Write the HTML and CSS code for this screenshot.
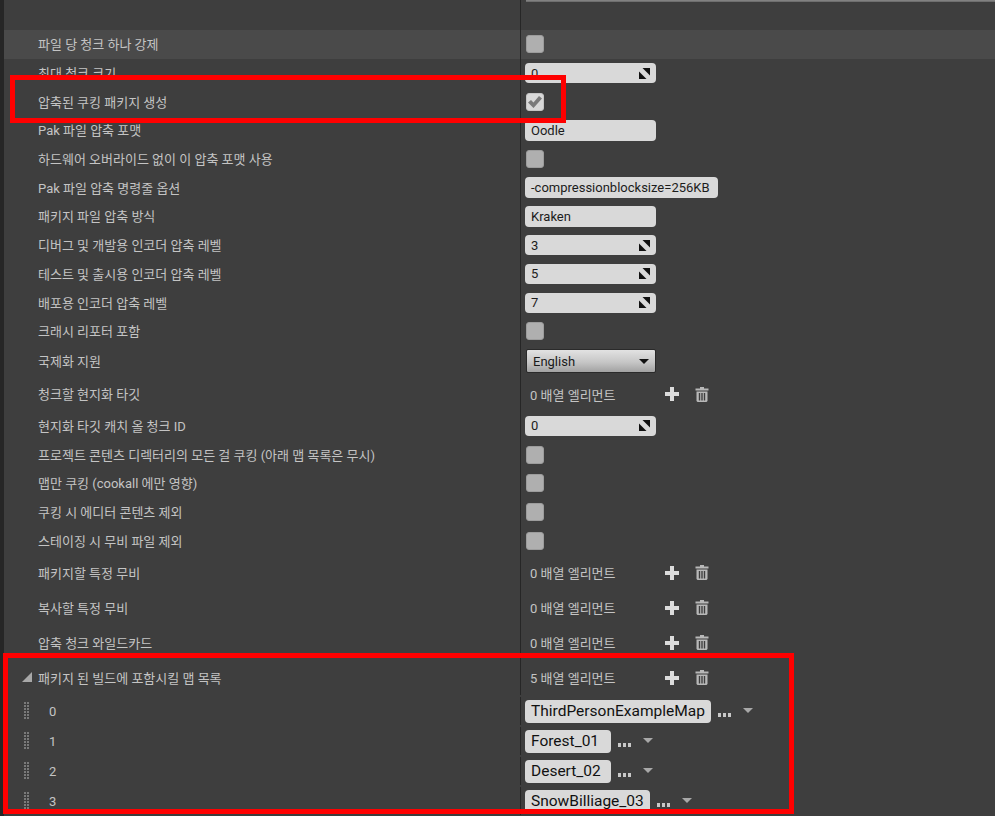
FILE: index.html
```html
<!DOCTYPE html>
<html lang="ko">
<head>
<meta charset="utf-8">
<title>패키징 설정</title>
<link rel="stylesheet" href="styles.css">
</head>
<body>
<svg class="defs" width="0" height="0" aria-hidden="true">
  <symbol id="spin" viewBox="0 0 11 11"><path d="M3.500 0H11V7.500Z"/><path d="M0 3.500L7.500 11H0Z"/></symbol>
  <symbol id="plus" viewBox="0 0 14 14"><path d="M5 0H9V5H14V9H9V14H5V9H0V5H5Z"/></symbol>
  <symbol id="trash" viewBox="0 0 14 15"><path d="M5 0H9V1.500H13.500V3.500H.5V1.500H5Z"/><path fill-rule="evenodd" d="M1.500 4.500H12.500V14L11.500 15H2.500L1.500 14ZM3.800 6V13.500H5.200V6ZM6.300 6V13.500H7.700V6ZM8.800 6V13.500H10.200V6Z"/></symbol>
  <symbol id="grip" viewBox="0 0 7 18"><path d="M0 0h2v2H0zM3 0h2v2H3zM0 3h2v2H0zM3 3h2v2H3zM0 6h2v2H0zM3 6h2v2H3zM0 9h2v2H0zM3 9h2v2H3zM0 12h2v2H0zM3 12h2v2H3zM0 15h2v2H0zM3 15h2v2H3z"/></symbol>
  <symbol id="check" viewBox="0 0 14 12"><path d="M0 6.500L3 4 5.500 6.500 11 0 14 2.500 5.500 12Z"/></symbol>
</svg>
<div class="page">
  <div class="strip"></div>
  <main class="panel">
    <div class="top"><div class="name"></div><div class="value"><div class="topline"></div></div></div>

    <div class="row h29 hover"><div class="name">파일 당 청크 하나 강제</div><div class="value"><span class="check"></span></div></div>
    <div class="row h29"><div class="name">최대 청크 크기</div><div class="value"><div class="num">0<svg class="spin"><use href="#spin"/></svg></div></div></div>
    <div class="row h28"><div class="name">압축된 쿠킹 패키지 생성</div><div class="value"><span class="check on"><svg class="tick"><use href="#check"/></svg></span></div></div>
    <div class="row h29"><div class="name">Pak 파일 압축 포맷</div><div class="value"><div class="txt">Oodle</div></div></div>
    <div class="row h29"><div class="name">하드웨어 오버라이드 없이 이 압축 포맷 사용</div><div class="value"><span class="check"></span></div></div>
    <div class="row h28"><div class="name">Pak 파일 압축 명령줄 옵션</div><div class="value"><div class="txt wide">-compressionblocksize=256KB</div></div></div>
    <div class="row h29"><div class="name">패키지 파일 압축 방식</div><div class="value"><div class="txt">Kraken</div></div></div>
    <div class="row h29"><div class="name">디버그 및 개발용 인코더 압축 레벨</div><div class="value"><div class="num">3<svg class="spin"><use href="#spin"/></svg></div></div></div>
    <div class="row h29"><div class="name">테스트 및 출시용 인코더 압축 레벨</div><div class="value"><div class="num">5<svg class="spin"><use href="#spin"/></svg></div></div></div>
    <div class="row h29"><div class="name">배포용 인코더 압축 레벨</div><div class="value"><div class="num">7<svg class="spin"><use href="#spin"/></svg></div></div></div>
    <div class="row h28"><div class="name">크래시 리포터 포함</div><div class="value"><span class="check"></span></div></div>
    <div class="row h31"><div class="name">국제화 지원</div><div class="value"><div class="combo">English<span class="caret"></span></div></div></div>
    <div class="row h35"><div class="name">청크할 현지화 타깃</div><div class="value"><div class="arr"><span class="count">0 배열 엘리먼트</span><svg class="plus"><use href="#plus"/></svg><svg class="trash"><use href="#trash"/></svg></div></div></div>
    <div class="row h29"><div class="name">현지화 타깃 캐치 올 청크 ID</div><div class="value"><div class="num">0<svg class="spin"><use href="#spin"/></svg></div></div></div>
    <div class="row h29"><div class="name">프로젝트 콘텐츠 디렉터리의 모든 걸 쿠킹 (아래 맵 목록은 무시)</div><div class="value"><span class="check"></span></div></div>
    <div class="row h29"><div class="name">맵만 쿠킹 (cookall 에만 영향)</div><div class="value"><span class="check"></span></div></div>
    <div class="row h28"><div class="name">쿠킹 시 에디터 콘텐츠 제외</div><div class="value"><span class="check"></span></div></div>
    <div class="row h29"><div class="name">스테이징 시 무비 파일 제외</div><div class="value"><span class="check"></span></div></div>
    <div class="row h35"><div class="name">패키지할 특정 무비</div><div class="value"><div class="arr"><span class="count">0 배열 엘리먼트</span><svg class="plus"><use href="#plus"/></svg><svg class="trash"><use href="#trash"/></svg></div></div></div>
    <div class="row h35"><div class="name">복사할 특정 무비</div><div class="value"><div class="arr"><span class="count">0 배열 엘리먼트</span><svg class="plus"><use href="#plus"/></svg><svg class="trash"><use href="#trash"/></svg></div></div></div>
    <div class="row h35"><div class="name">압축 청크 와일드카드</div><div class="value"><div class="arr"><span class="count">0 배열 엘리먼트</span><svg class="plus"><use href="#plus"/></svg><svg class="trash"><use href="#trash"/></svg></div></div></div>
    <div class="row h35"><div class="name group"><span class="tri"></span>패키지 된 빌드에 포함시킬 맵 목록</div><div class="value"><div class="arr"><span class="count">5 배열 엘리먼트</span><svg class="plus"><use href="#plus"/></svg><svg class="trash"><use href="#trash"/></svg></div></div></div>
    <div class="row h30"><div class="name item"><svg class="grip"><use href="#grip"/></svg><span class="idx">0</span></div><div class="value"><div class="map"><span class="chip">ThirdPersonExampleMap</span><span class="dots"></span><span class="drop"></span></div></div></div>
    <div class="row h30"><div class="name item"><svg class="grip"><use href="#grip"/></svg><span class="idx">1</span></div><div class="value"><div class="map"><span class="chip w86">Forest_01</span><span class="dots"></span><span class="drop"></span></div></div></div>
    <div class="row h30"><div class="name item"><svg class="grip"><use href="#grip"/></svg><span class="idx">2</span></div><div class="value"><div class="map"><span class="chip w86">Desert_02</span><span class="dots"></span><span class="drop"></span></div></div></div>
    <div class="row h30"><div class="name item"><svg class="grip"><use href="#grip"/></svg><span class="idx">3</span></div><div class="value"><div class="map"><span class="chip">SnowBilliage_03</span><span class="dots"></span><span class="drop"></span></div></div></div>
  </main>
  <div class="mark mark-a"></div>
  <div class="mark mark-b"></div>
</div>
</body>
</html>
```
FILE: styles.css
```css
* { box-sizing: border-box; }
html, body { margin: 0; height: 816px; overflow: hidden; background: #3e3e3e; }
.defs { position: absolute; }
.page { position: relative; display: flex; width: 995px; height: 816px; overflow: hidden;
  font-family: Roboto, "Noto Sans CJK KR", sans-serif; font-size: 13px; color: #c4c4c4; }
.strip { width: 4px; flex: none; background: #262626; }
.panel { flex: 1; min-width: 0; }
.top { display: flex; height: 30px; }
.top .name { height: 30px; }
.topline { height: 2px; margin-left: 1px; background: linear-gradient(#8a8a8a, #666); }
.row { display: flex; align-items: stretch; overflow: visible; }
.h28 { height: 28.7px; }
.h29 { height: 28.7px; }
.h30 { height: 30px; }
.h31 { height: 31px; }
.h35 { height: 35px; }
.hover { background: #4a4a4a; }
.name { width: 516px; flex: none; padding-left: 34px; padding-bottom: 1px; display: flex; align-items: center; white-space: nowrap; }
.value { flex: 1; border-left: 1px solid #262626; padding-left: 4px; display: flex; flex-direction: column; justify-content: center; min-width: 0; }
.top .value { justify-content: flex-start; }
.check { display: block; width: 18px; height: 18px; margin-left: 1px; border-radius: 3px; background: #afafaf; border: 1px solid #9c9c9c; }
.check.on { background: #d8d8d8; border-color: #c4c4c4; display: flex; align-items: center; justify-content: center; }
.tick { width: 14px; height: 12px; fill: #7a7a7a; }
.num, .txt { width: 131px; height: 20px; border-radius: 4px; background: #d9d9d9; color: #1c1c1c; font-size: 13px; padding: 0 6px; display: flex; align-items: center; justify-content: space-between; white-space: nowrap; }
.txt { height: 21px; }
.wide { width: 193px; }
.spin { width: 11px; height: 11px; fill: #111; }
.combo { width: 130px; height: 24px; margin-left: 1px; border: 1px solid #2a2a2a; border-radius: 2px; background: linear-gradient(#e2e2e2, #c6c6c6 55%, #a2a2a2); color: #1a1a1a; font-size: 13px; padding: 0 6px; display: flex; align-items: center; justify-content: space-between; }
.caret { width: 0; height: 0; border-left: 5.5px solid transparent; border-right: 5.5px solid transparent; border-top: 5px solid #111; }
.arr { display: flex; align-items: center; padding-left: 5px; }
.count { width: 135px; }
.plus { width: 14px; height: 14px; fill: #dcdcdc; flex: none; }
.trash { width: 14px; height: 15px; fill: #b8b8b8; flex: none; margin-left: 16px; }
.group { padding-left: 18px; }
.tri { width: 0; height: 0; margin-right: 6px; border-left: 10px solid transparent; border-bottom: 10px solid #a8a8a8; }
.h30 { padding-top: 2px; }
.item { padding-left: 20px; padding-bottom: 0; }
.grip { width: 7px; height: 18px; fill: #7a7a7a; flex: none; }
.idx { margin-left: 18px; font-size: 13px; }
.map { display: flex; align-items: center; color: #111; }
.chip { display: block; height: 23px; line-height: 23px; padding: 0 6px; border-radius: 4px; background: #d9d9d9; font-size: 15.5px; white-space: nowrap; }
.w86 { width: 86px; }
.dots { width: 14px; height: 4px; margin-left: 7px; margin-top: 7px; background: linear-gradient(90deg, #c8c8c8 3px, transparent 3px) 0 0 / 5px 4px repeat-x; }
.drop { width: 0; height: 0; margin-left: 11px; margin-top: -2px; border-left: 5px solid transparent; border-right: 5px solid transparent; border-top: 5px solid #a8a8a8; }
.mark { position: absolute; border: 5px solid #f00; pointer-events: none; }
.mark-a { left: 10px; top: 75px; width: 556px; height: 48px; }
.mark-b { left: 3px; top: 653px; width: 791px; height: 161px; }
```
